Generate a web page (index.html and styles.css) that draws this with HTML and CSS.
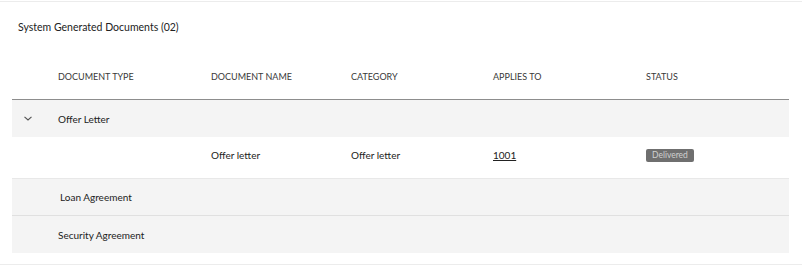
FILE: index.html
```html
<!DOCTYPE html>
<html lang="en">
<head>
    <meta charset="UTF-8">
    <meta name="viewport" content="width=device-width, initial-scale=1.0">
    <title>System Generated Documents</title>
    <link rel="stylesheet" href="styles.css">
</head>
<body>
    <div class="card">
        <h2 class="title">System Generated Documents (02)</h2>

        <div class="doc-table">
            <div class="row head">
                <div></div>
                <div>Document Type</div>
                <div>Document Name</div>
                <div>Category</div>
                <div>Applies To</div>
                <div>Status</div>
            </div>

            <div class="row group open">
                <div class="toggle">
                    <svg width="8" height="5" viewBox="0 0 8 5"><path d="M0.5 0.8 L4 4 L7.5 0.8" fill="none" stroke="#525252" stroke-width="1.1"/></svg>
                </div>
                <div>Offer Letter</div>
                <div></div>
                <div></div>
                <div></div>
                <div></div>
            </div>
            <div class="row child">
                <div></div>
                <div></div>
                <div>Offer letter</div>
                <div>Offer letter</div>
                <div><a href="#" class="link">1001</a></div>
                <div><span class="tag">Delivered</span></div>
            </div>

            <div class="row group">
                <div></div>
                <div class="nudge">Loan Agreement</div>
                <div></div>
                <div></div>
                <div></div>
                <div></div>
            </div>
            <div class="row group">
                <div></div>
                <div>Security Agreement</div>
                <div></div>
                <div></div>
                <div></div>
                <div></div>
            </div>
        </div>
    </div>
</body>
</html>
```

FILE: styles.css
```css
/* General Styles */
body {
    font-family: 'Lato', 'Noto Sans', sans-serif;
    background-color: #fff;
    color: #222;
    margin: 0;
    padding: 0;
}

/* Card */
.card {
    margin-top: 1px;
    border-top: 1px solid #ececec;
    border-bottom: 1px solid #ececec;
    padding: 0 13px 11px 12px;
}

.title {
    margin: 0;
    padding: 19px 0 0 6px;
    height: 32px;
    box-sizing: border-box;
    font-size: 10.5px;
    font-weight: 400;
    color: #222;
}

/* Table */
.doc-table {
    font-size: 10px;
}
.row {
    display: grid;
    grid-template-columns: 46px 153px 140px 142px 153px 1fr;
    align-items: center;
    box-sizing: border-box;
}
.row.head {
    height: 46px;
    margin-top: 20px;
    border-bottom: 1px solid #8d8d8d;
    text-transform: uppercase;
    font-size: 9px;
    color: #393939;
}
.row.group {
    background-color: #f4f4f4;
    height: 37px;
}
.row.child {
    height: 42px;
    padding-bottom: 6px;
    border-bottom: 1px solid #e8e8e8;
}
.row.child + .row.group {
    height: 36px;
}
.row.group + .row.group {
    border-top: 1px solid #e0e0e0;
    height: 38px;
    padding-top: 1px;
}
.toggle {
    padding-left: 12px;
    display: flex;
    align-items: center;
}
.nudge {
    padding-left: 2px;
}

.link {
    color: #222;
    text-decoration: underline;
}

.tag {
    display: inline-block;
    background-color: #6f6f6f;
    color: #d0d0d0;
    font-size: 8.5px;
    padding: 1px 6px;
    border-radius: 2px;
    line-height: 11px;
}
```
